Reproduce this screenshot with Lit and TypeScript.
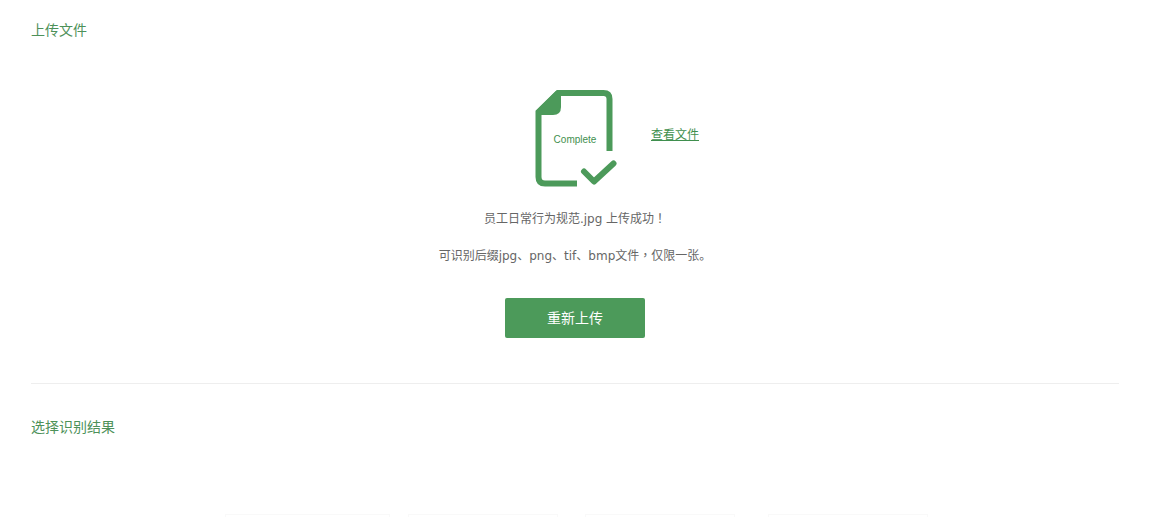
import { LitElement, html, css } from "lit";
import { customElement } from "lit/decorators.js";

@customElement("app-root")
export class AppRoot extends LitElement {
  static styles = css`
    :host {
      display: block;
      height: 517px;
      overflow: hidden;
      box-sizing: border-box;
      padding: 20px 48px 0 31px;
      background: #fff;
      color: #666;
      font-family: "DejaVu Sans", "Noto Sans CJK SC", sans-serif;
      font-size: 12px;
    }
    .title {
      margin: 0;
      font-family: "Noto Sans CJK SC", sans-serif;
      font-size: 14px;
      font-weight: 400;
      line-height: 18px;
      height: 20px;
      color: #4d9159;
    }
    .upload {
      display: flex;
      flex-direction: column;
      align-items: center;
      margin-top: 48px;
      padding-bottom: 45px;
      border-bottom: 1px solid #eee;
    }
    .figure {
      display: grid;
      grid-template-columns: 1fr auto 1fr;
      align-items: center;
      width: 100%;
    }
    .figure svg {
      display: block;
      grid-column: 2;
    }
    .link {
      grid-column: 3;
      margin-left: 34px;
      margin-top: -6px;
      line-height: 20px;
      color: #3f8f4e;
      text-decoration: underline;
    }
    .line {
      margin: 0;
      line-height: 20px;
      height: 20px;
    }
    .first {
      margin-top: 20px;
    }
    .second {
      margin-top: 17px;
    }
    .tc {
      font-family: "Noto Sans CJK TC", sans-serif;
    }
    .btn {
      width: 140px;
      height: 40px;
      margin-top: 33px;
      padding: 0 0 2px;
      border: 0;
      border-radius: 2px;
      background: #4c9a5a;
      color: #fff;
      font-family: "Noto Sans CJK SC", sans-serif;
      font-size: 14px;
    }
    .results {
      margin-top: 33px;
    }
    .cards {
      display: flex;
      margin: 77px 0 0 194px;
    }
    .card {
      flex: none;
      height: 120px;
      border: 1px solid #f9f9f9;
      box-sizing: border-box;
    }
    .card-a {
      width: 165px;
    }
    .card-b {
      width: 150px;
      margin-left: 18px;
    }
    .card-c {
      width: 150px;
      margin-left: 27px;
    }
    .card-d {
      width: 160px;
      margin-left: 33px;
    }
  `;

  render() {
    return html`
      <h2 class="title">上传文件</h2>
      <section class="upload">
        <div class="figure">
          <svg width="84" height="100" viewBox="0 0 84 100" fill="none">
            <path d="M76.5 63V11Q76.5 5 70.5 5H25L5.5 24V89Q5.5 95.5 12 95.5H44" stroke="#4c9a5a" stroke-width="6" />
            <path d="M23 3L3 23V27H20Q28 27 28 19V3Z" fill="#4c9a5a" />
            <path d="M51 83.5L61 93.5L80.5 75.5" stroke="#4c9a5a" stroke-width="6" stroke-linecap="round" stroke-linejoin="round" />
            <text x="42" y="55" text-anchor="middle" font-family="Liberation Sans, sans-serif" font-size="10" fill="#3f8f4e">Complete</text>
          </svg>
          <a class="link">查看文件</a>
        </div>
        <p class="line first">员工日常行为规范.jpg 上传成功<span class="tc">！</span></p>
        <p class="line second">可识别后缀jpg、png、tif、bmp文件<span class="tc">，</span>仅限一张。</p>
        <button class="btn">重新上传</button>
      </section>
      <section class="results">
        <h2 class="title">选择识别结果</h2>
        <div class="cards">
          <div class="card card-a"></div>
          <div class="card card-b"></div>
          <div class="card card-c"></div>
          <div class="card card-d"></div>
        </div>
      </section>
    `;
  }
}
